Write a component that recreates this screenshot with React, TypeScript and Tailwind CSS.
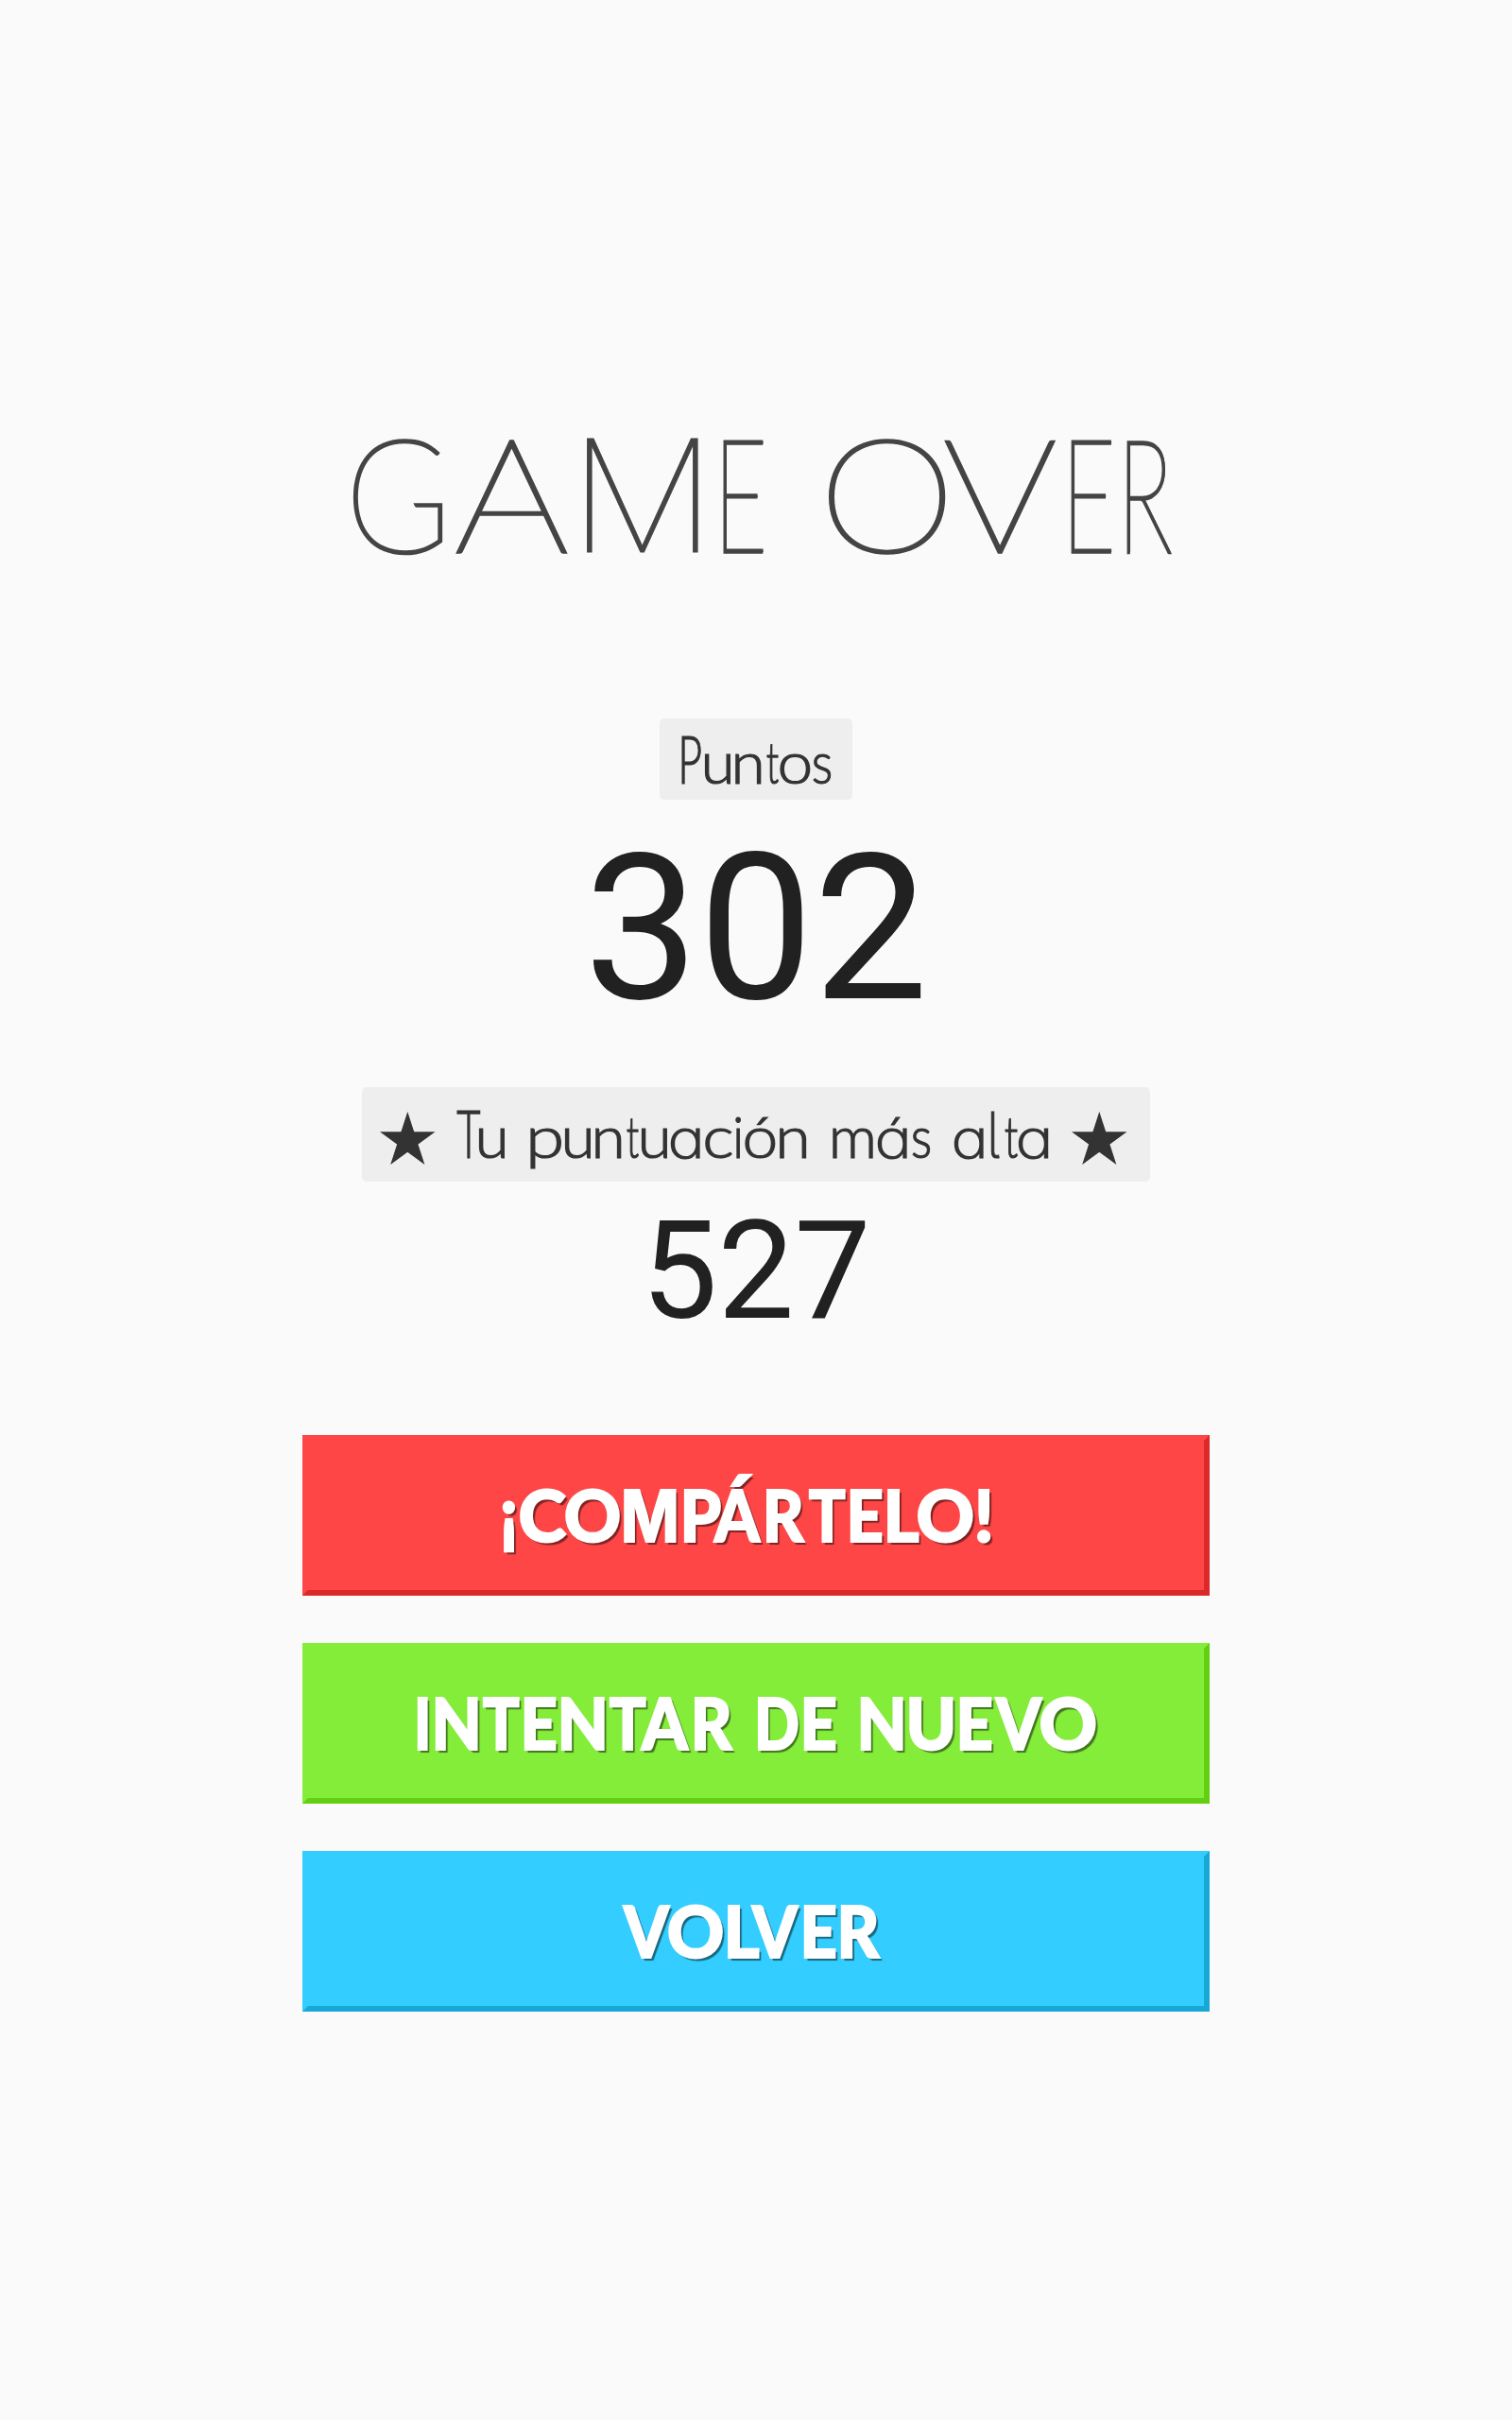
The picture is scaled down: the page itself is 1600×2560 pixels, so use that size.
import React from "react";

type Glyph = {
  ch: string;
  from: number;
  to: number;
  font?: string;
  features?: string;
  className?: string;
  drop?: number;
};

type Style = { font: string; className: string; outline: number };

const g = (ch: string, from: number, to: number, extra: Partial<Glyph> = {}): Glyph => ({ ch, from, to, ...extra });

const ctx = document.createElement("canvas").getContext("2d")!;

/* Ink extents of a character, measured at 8x for sub-pixel precision. */
function ink(font: string, ch: string) {
  ctx.font = font.replace(/([\d.]+)px/, (_, n) => `${Number(n) * 8}px`);
  const m = ctx.measureText(ch);
  return { left: -m.actualBoundingBoxLeft / 8, right: m.actualBoundingBoxRight / 8 };
}

/* A line of display lettering in which each character is fitted to its own width. */
function Lettering({ glyphs, style }: { glyphs: Glyph[]; style: Style }) {
  return (
    <>
      {glyphs.map((item, i) => {
        const gap = i === 0 ? 0 : item.from - glyphs[i - 1].to;
        if (item.ch === " ") {
          return (
            <span key={i} className="shrink-0 whitespace-pre text-[10px] leading-[0]" style={{ width: item.to - item.from, marginLeft: gap }}>
              {" "}
            </span>
          );
        }
        const font = item.font ?? style.font;
        const { left, right } = ink(font, item.ch);
        const o = style.outline;
        const scale = (item.to - item.from) / (right - left + 2 * o);
        return (
          <span key={i} className="shrink-0" style={{ width: item.to - item.from, marginLeft: gap, lineHeight: 0 }}>
            <span
              className={`inline-block origin-left whitespace-nowrap ${style.className} ${item.className ?? ""}`}
              style={{
                font,
                fontFeatureSettings: item.features,
                lineHeight: 0,
                transform: `translateY(${item.drop ?? 0}px) scaleX(${scale}) translateX(${o - left}px)`,
              }}
            >
              {item.ch}
            </span>
          </span>
        );
      })}
    </>
  );
}

const titleStyle: Style = { font: "100 166px Lato", className: "text-[#444] [-webkit-text-stroke:3.4px_#444]", outline: 1.7 };
const labelStyle: Style = { font: "300 62px Lato", className: "text-[#333] [-webkit-text-stroke:1.2px_#333]", outline: 0.6 };
const buttonStyle: Style = { font: "900 76.5px Lato", className: "text-white [-webkit-text-stroke:2px_#fff]", outline: 1 };

const narrow = { className: "[text-shadow:2px_0_#444,1px_0_#444,-1px_0_#444]" };
const thinM = { font: "100 168px Roboto", className: "[-webkit-text-stroke:0.8px_#444]!" };
const boldM = { font: "700 76px Inter" };
const cap = { font: "300 70px Lato" };
const alt = { font: "200 57px Inter", features: "'cv11'" };
const tailed = { font: "200 67px Inter", features: "'cv05'" };
const star = { font: "400 72px 'DejaVu Sans'", drop: 5 };

const title = [
  g("G", 373, 469), g("A", 482, 601.5), g("M", 619, 741, thinM), g("E", 765, 808, narrow), g(" ", 808, 876),
  g("O", 876, 1001), g("V", 999, 1118), g("E", 1133, 1176.5, narrow), g("R", 1192, 1240, narrow),
];

const points = [
  g("P", 721, 742, cap), g("u", 745, 773), g("n", 778, 806), g("t", 811, 824), g("o", 825, 858), g("s", 860, 880),
];

const best = [
  g("★", 403, 460, star), g(" ", 460, 483),
  g("T", 483, 509, cap), g("u", 506, 534), g(" ", 534, 561),
  g("p", 561, 594), g("u", 597, 625), g("n", 630, 658), g("t", 663, 676), g("u", 678, 706), g("a", 709, 737.5, alt),
  g("c", 746, 775), g("i", 778, 784), g("ó", 788, 821), g("n", 825, 854), g(" ", 854, 881),
  g("m", 881, 924), g("á", 928, 956.5, alt), g("s", 965, 985), g(" ", 985, 1009),
  g("a", 1009, 1037.5, alt), g("l", 1048, 1052.5, tailed), g("t", 1063, 1077), g("a", 1077, 1106, alt), g(" ", 1111, 1135),
  g("★", 1135, 1192, star),
];

const share = [
  g("¡", 531, 546, { drop: -3 }), g("C", 550, 600), g("O", 598, 656), g("M", 660, 716, boldM), g("P", 723, 763), g("Á", 754, 806),
  g("R", 810, 852), g("T", 855, 895), g("E", 899, 934), g("L", 938, 973), g("O", 971, 1030), g("!", 1033, 1049),
];

const retry = [
  g("I", 441, 453), g("N", 460, 506), g("T", 510, 550), g("E", 554, 589), g("N", 593, 640), g("T", 644, 684),
  g("A", 677, 730), g("R", 734, 776), g(" ", 776, 801), g("D", 801, 845), g("E", 850, 885), g(" ", 885, 910),
  g("N", 910, 956), g("U", 962, 1009), g("E", 1015, 1050), g("V", 1052, 1104), g("O", 1101, 1160),
];

const back = [g("V", 658, 710), g("O", 707, 765), g("L", 769, 804), g("V", 794, 846), g("E", 850, 885), g("R", 889, 932)];

function GameButton({ glyphs, className }: { glyphs: Glyph[]; className: string }) {
  return (
    <button
      className={`flex h-[170px] w-[960px] items-baseline overflow-hidden border-6 [text-shadow:3px_3px_1px_rgba(0,0,0,0.5)] ${className}`}
      style={{ paddingLeft: glyphs[0].from - 326 }}
    >
      <span className="h-[107px] w-0 shrink-0" />
      <Lettering glyphs={glyphs} style={buttonStyle} />
    </button>
  );
}

export default function App() {
  return (
    <main className="flex h-[2560px] w-[1600px] flex-col items-center overflow-hidden bg-[#fafafa] pt-[440px]">
      <h1 className="mb-[120px] flex h-[200px] w-full items-baseline pl-[373px]">
        <span className="h-[144px] w-0 shrink-0" />
        <Lettering glyphs={title} style={titleStyle} />
      </h1>

      <div className="flex h-[86px] w-[204px] items-baseline rounded-[5px] bg-[#eee] pl-[23px]">
        <span className="h-[69px] w-0 shrink-0" />
        <Lettering glyphs={points} style={labelStyle} />
      </div>
      <div className="flex h-[304px] items-baseline font-[Roboto] text-[216px] leading-[0] text-[#212121]">
        <span className="h-[210px] w-0 shrink-0" />
        302
      </div>

      <div className="flex h-[100px] w-[834px] items-baseline rounded-[5px] bg-[#eee] pl-[20px]">
        <span className="h-[75px] w-0 shrink-0" />
        <Lettering glyphs={best} style={labelStyle} />
      </div>
      <div className="mb-[50px] flex h-[218px] items-baseline font-[Roboto] text-[144px] leading-[0] text-[#212121]">
        <span className="h-[144px] w-0 shrink-0" />
        527
      </div>

      <div className="flex flex-col gap-[50px]">
        <GameButton glyphs={share} className="border-t-[#ff4646] border-r-[#db2828] border-b-[#db2828] border-l-[#ff4646] bg-[#ff4646]" />
        <GameButton glyphs={retry} className="border-t-[#84ed3a] border-r-[#62cf12] border-b-[#62cf12] border-l-[#84ed3a] bg-[#84ed3a]" />
        <GameButton glyphs={back} className="border-t-[#33ceff] border-r-[#18a8d8] border-b-[#18a8d8] border-l-[#33ceff] bg-[#33ceff]" />
      </div>
    </main>
  );
}
